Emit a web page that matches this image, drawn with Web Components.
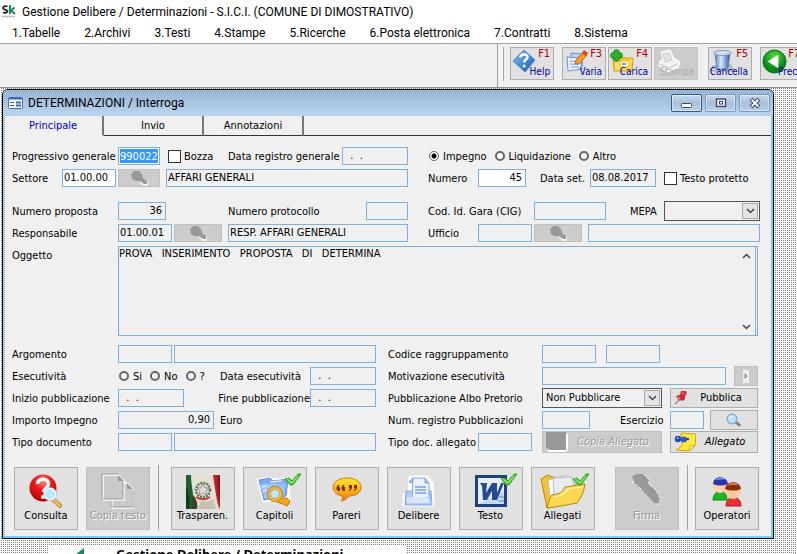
<!DOCTYPE html>
<html lang="it">
<head>
<meta charset="utf-8">
<title>Gestione Delibere / Determinazioni</title>
<style>
  html, body { height: 100%; }
  body {
    margin: 0;
    display: flex;
    flex-direction: column;
    overflow: hidden;
    background: #fff;
    color: #000;
    font: 11px/14px "DejaVu Sans Condensed", "Noto Sans", sans-serif;
  }

  /* label widths */
  .lead { --label: 106px; }
  .lead-wide { --label: 154px; }
  .lead-mid { --label: 90px; }
  .lead-short { --label: 50px; }
  .lead-date { --label: 114px; }
  .lead-prot { --label: 138px; }
  .lead-mepa { --label: 34px; }

  /* box widths */
  .xs { --box: 34px; }
  .s { --box: 42px; }
  .m { --box: 48px; }
  .l { --box: 54px; }
  .date { --box: 66px; }
  .cig { --box: 72px; }
  .sum { --box: 96px; }
  .list { --box: 120px; }
  .fill { flex: 1; --box: 100%; }

  /* distances inside a row */
  .near { margin-left: 4px; }
  .apart { margin-left: 6px; }
  .group { margin-left: 8px; }
  .far { margin-left: 12px; }
  .end { margin-left: auto; }
  .unit { padding-top: 2px; }
</style>
</head>
<body>
  <sk-titlebar>Gestione Delibere / Determinazioni - S.I.C.I. (COMUNE DI DIMOSTRATIVO)</sk-titlebar>
  <sk-menubar>
    <a href="#tabelle">1.Tabelle</a>
    <a href="#archivi">2.Archivi</a>
    <a href="#testi">3.Testi</a>
    <a href="#stampe">4.Stampe</a>
    <a href="#ricerche">5.Ricerche</a>
    <a href="#posta">6.Posta elettronica</a>
    <a href="#contratti">7.Contratti</a>
    <a href="#sistema">8.Sistema</a>
  </sk-menubar>
  <sk-toolbar>
    <sk-tool icon="help" key="F1">Help</sk-tool>
    <sk-tool icon="edit" key="F3" class="apart">Varia</sk-tool>
    <sk-tool icon="load" key="F4">Carica</sk-tool>
    <sk-tool icon="print" disabled>Stampa</sk-tool>
    <sk-tool icon="trash" key="F5" class="group">Cancella</sk-tool>
    <sk-tool icon="back" key="F7" class="apart">Prec.</sk-tool>
  </sk-toolbar>

  <sk-desktop>
    <sk-window caption="DETERMINAZIONI / Interroga">
      <sk-tabs slot="tabs">
        <button aria-current="page">Principale</button>
        <button>Invio</button>
        <button>Annotazioni</button>
      </sk-tabs>

      <sk-columns>
        <sk-row>
          <sk-field class="lead s" label="Progressivo generale" value="990022" selected></sk-field>
          <sk-check class="apart" label="Bozza"></sk-check>
          <sk-field class="lead-date date end" label="Data registro generale" value="  .  ."></sk-field>
        </sk-row>
        <sk-row slot="right">
          <sk-radios name="Tipo" options="Impegno|Liquidazione|Altro" checked="Impegno"></sk-radios>
        </sk-row>
        <sk-row>
          <sk-field class="lead-short l" label="Settore" value="01.00.00" editable></sk-field>
          <sk-button class="s" icon="lookup" name="Cerca settore" disabled></sk-button>
          <sk-field class="fill near" name="Descrizione settore" value="AFFARI GENERALI"></sk-field>
        </sk-row>
        <sk-row slot="right">
          <sk-field class="lead-short m" label="Numero" value="45" editable numeric></sk-field>
          <sk-field class="lead-short date far" label="Data set." value="08.08.2017"></sk-field>
          <sk-check class="apart" label="Testo protetto"></sk-check>
        </sk-row>
      </sk-columns>

      <sk-columns class="spaced">
        <sk-row>
          <sk-field class="lead m" label="Numero proposta" value="36" numeric></sk-field>
          <sk-field class="lead-prot s end" label="Numero protocollo"></sk-field>
        </sk-row>
        <sk-row slot="right">
          <sk-field class="lead cig" label="Cod. Id. Gara (CIG)"></sk-field>
          <sk-select class="lead-mepa sum end" label="MEPA" value=""></sk-select>
        </sk-row>
        <sk-row>
          <sk-field class="lead l" label="Responsabile" value="01.00.01"></sk-field>
          <sk-button class="m" icon="lookup" name="Cerca responsabile" disabled></sk-button>
          <sk-field class="fill near" name="Nome responsabile" value="RESP. AFFARI GENERALI"></sk-field>
        </sk-row>
        <sk-row slot="right">
          <sk-field class="lead-short l" label="Ufficio"></sk-field>
          <sk-button class="m" icon="lookup" name="Cerca ufficio" disabled></sk-button>
          <sk-field class="fill near" name="Descrizione ufficio"></sk-field>
        </sk-row>
      </sk-columns>

      <sk-memo class="lead" label="Oggetto">PROVA   INSERIMENTO   PROPOSTA   DI   DETERMINA</sk-memo>

      <sk-columns class="lower">
        <sk-row>
          <sk-field class="lead l" label="Argomento"></sk-field>
          <sk-field class="fill" name="Descrizione argomento"></sk-field>
        </sk-row>
        <sk-row slot="right">
          <sk-field class="lead-wide l" label="Codice raggruppamento"></sk-field>
          <sk-field class="l group" name="Sottocodice"></sk-field>
        </sk-row>
        <sk-row>
          <sk-radios class="lead" label="Esecutività" name="Esecutività" options="Si|No|?"></sk-radios>
          <sk-field class="lead-mid date end" label="Data esecutività" value="  .  ."></sk-field>
        </sk-row>
        <sk-row slot="right">
          <sk-field class="lead-wide fill" label="Motivazione esecutività"></sk-field>
          <sk-button class="apart" icon="more" name="Altre motivazioni" disabled style="--box: 24px; --height: 20px"></sk-button>
        </sk-row>
        <sk-row>
          <sk-field class="lead date" label="Inizio pubblicazione" value="  .  ."></sk-field>
          <sk-field class="lead-mid date end" label="Fine pubblicazione" value="  .  ."></sk-field>
        </sk-row>
        <sk-row slot="right">
          <sk-select class="lead-wide list" label="Pubblicazione Albo Pretorio" value="Non Pubblicare"></sk-select>
          <sk-button class="end" icon="pin" style="--box: 88px; --height: 20px">Pubblica</sk-button>
        </sk-row>
        <sk-row>
          <sk-field class="lead sum" label="Importo Impegno" value="0,90" numeric></sk-field>
          <span class="near unit">Euro</span>
        </sk-row>
        <sk-row slot="right">
          <sk-field class="lead-wide m" label="Num. registro Pubblicazioni"></sk-field>
          <sk-field class="lead-short xs end" label="Esercizio"></sk-field>
          <sk-button class="m near" icon="zoom" name="Cerca registro" style="--height: 20px"></sk-button>
        </sk-row>
        <sk-row>
          <sk-field class="lead l" label="Tipo documento"></sk-field>
          <sk-field class="fill" name="Descrizione tipo documento"></sk-field>
        </sk-row>
        <sk-row slot="right">
          <sk-field class="lead-mid l" label="Tipo doc. allegato"></sk-field>
          <sk-button class="list end" icon="sheet" disabled slanted style="--height: 22px">Copia Allegato</sk-button>
          <sk-button class="apart" icon="attach" slanted style="--box: 88px; --height: 22px">Allegato</sk-button>
        </sk-row>
      </sk-columns>

      <sk-actions slot="actions">
        <sk-action icon="consulta">Consulta</sk-action>
        <sk-action icon="copia" disabled>Copia testo</sk-action>
        <hr>
        <sk-action class="near" icon="trasparenza">Trasparen.</sk-action>
        <sk-action icon="capitoli">Capitoli</sk-action>
        <sk-action icon="pareri">Pareri</sk-action>
        <sk-action icon="delibere">Delibere</sk-action>
        <sk-action icon="testo">Testo</sk-action>
        <sk-action icon="allegati">Allegati</sk-action>
        <sk-action class="far" icon="firma" disabled>Firma</sk-action>
        <hr>
        <sk-action icon="operatori">Operatori</sk-action>
      </sk-actions>
    </sk-window>
    <sk-banner>Gestione Delibere / Determinazioni</sk-banner>
  </sk-desktop>

<script>
const TICK = `<path d="M28 6l4-1 3 3 6-7h3l-8 11h-3z" fill="#4fc832" stroke="#2a9a1c" stroke-width=".8"/><path d="M30 6l5 4 6-7" fill="none" stroke="#b4f09a"/>`;

const ICONS = {
  logo: `<svg viewBox="0 0 14 14" width="14" height="14"><path d="M5.500 1.500C3 .5 1 1.500 1 3s1.500 1.500 3 2 2 1 1 2-2.500 1-4 .3" fill="none" stroke="#222" stroke-width="1.800"/><path d="M8 0v9M12.500 2.500L9 5.500l4 3.500" fill="none" stroke="#1c8a5a" stroke-width="2"/><path d="M0 11.500h13" stroke="#999" stroke-dasharray="1 .6" stroke-width="1.500"/></svg>`,
  form: `<svg viewBox="0 0 15 12" width="15" height="12"><rect x=".5" y=".5" width="14" height="11" rx="1" fill="#f4f8ff" stroke="#4a70b8"/><path d="M1 1.500h13" stroke="#3c68b8" stroke-width="2"/><path d="M2 5.500h4M2 8.500h4" stroke="#555"/><rect x="8" y="4.500" width="5" height="2" fill="#3c68b8"/><rect x="8" y="7.500" width="5" height="2" fill="#3c68b8"/></svg>`,
  help: `<svg viewBox="0 0 24 24" width="24" height="24"><defs><linearGradient id="g" x1="0" y1="0" x2="1" y2="1"><stop offset="0" stop-color="#8cc4f4"/><stop offset="1" stop-color="#0c54b4"/></linearGradient></defs><path d="M12 1l11 10-10 12L1 12z" fill="url(#g)" stroke="#4888d0"/><path d="M8.500 8.500c0-4 7-4 7-.5 0 2.500-3.300 2.500-3.300 5.500" fill="none" stroke="#fff" stroke-width="2.500"/><circle cx="12.200" cy="17" r="1.500" fill="#fff"/></svg>`,
  edit: `<svg viewBox="0 0 24 24" width="24" height="24"><path d="M7 4l12 1-1 13-12-1z" fill="#b8d0fa" stroke="#6890e0"/><path d="M3 8l13 1 2 11-14 2z" fill="#e8f0ff" stroke="#6890e0"/><path d="M6 12l8 .5M6 15l9 .5M7 18h8" stroke="#7ca0e8"/><path d="M12 11l7-8 4 3-7 8-5 1z" fill="#f8a020" stroke="#c86810"/><path d="M18 4l2-3 4 3-2 3z" fill="#e04030"/></svg>`,
  load: `<svg viewBox="0 0 24 24" width="24" height="24"><path d="M3 8l8-1 2 2h10l-1 13H4z" fill="#f8c828" stroke="#d89c10"/><path d="M5 11h17l-1 10H5z" fill="#fce060"/><path d="M10 12h9v6h-9z" fill="#fff4b8" stroke="#e0b030"/><path d="M12 14h4v2h-4z" fill="#70a0e0"/><g fill="#30b028" stroke="#188018" stroke-width=".7"><circle cx="6.500" cy="3.500" r="3"/><circle cx="3.500" cy="6.500" r="3"/><circle cx="9.500" cy="6.500" r="3"/><circle cx="6.500" cy="9.500" r="3"/></g><circle cx="6.500" cy="6.500" r="3" fill="#30b028"/></svg>`,
  print: `<svg viewBox="0 0 24 24" width="24" height="24"><path d="M5 3l9-2 4 8 6 4-2 6-10 4-9-6 1-5 3-2z" fill="#f2f2f2" stroke="#fff"/><path d="M7 5l6-1 3 7-7 2z" fill="#e4e4e4" stroke="#ccc"/><path d="M4 15l9 4 8-4" fill="none" stroke="#bbb"/></svg>`,
  trash: `<svg viewBox="0 0 24 24" width="24" height="24"><defs><linearGradient id="g"><stop offset="0" stop-color="#5880c0"/><stop offset=".4" stop-color="#d8e8ff"/><stop offset="1" stop-color="#2858a8"/></linearGradient></defs><path d="M3 17l18-1 2 6H1z" fill="#c8ccd2" stroke="#999"/><path d="M5 4h15l-2 16H7z" fill="url(#g)" stroke="#6080b0"/><ellipse cx="12.500" cy="4" rx="8.500" ry="2.500" fill="#d4dce8" stroke="#8090a8"/></svg>`,
  back: `<svg viewBox="0 0 26 26" width="25" height="25"><defs><radialGradient id="g" cy=".3"><stop offset="0" stop-color="#60e040"/><stop offset="1" stop-color="#088818"/></radialGradient></defs><circle cx="13" cy="13" r="12" fill="url(#g)" stroke="#107018"/><path d="M17 6v14L6 13z" fill="#fff"/></svg>`,
  lookup: `<svg viewBox="0 0 18 16" width="18" height="16"><path d="M17 11v4h-3l-4-3" fill="none" stroke="#fff" stroke-width="1.500"/><path d="M1 4l3-3h5l3 3 1 4 4 3v3h-3l-4-3-5 0-3-2z" fill="#999"/></svg>`,
  more: `<svg viewBox="0 0 6 13" width="6" height="13"><path d="M0 0h6v13H0z" fill="#eee"/><path d="M1.500 4l2 2-2 2" fill="none" stroke="#222"/></svg>`,
  pin: `<svg viewBox="0 0 14 14" width="14" height="14"><path d="M5 9l-4 4" stroke="#888" stroke-width="1.200"/><path d="M7 0h5l1 2-2 3 0 3-2 2-2-1-1 1-4-4 2-2 2 0z" fill="#d02838"/><path d="M8 2l2 1M4 6l2 2" stroke="#ff8890" stroke-width="1.200"/></svg>`,
  zoom: `<svg viewBox="0 0 16 14" width="16" height="14"><path d="M10 8l5 4-2 1-4-3z" fill="#a87850" stroke="#886"/><circle cx="6" cy="6" r="4.800" fill="#b8e0fc" stroke="#8cacd0" stroke-width="1.500"/><path d="M3.500 6a3 3 0 0 1 3-3" stroke="#fff" fill="none"/></svg>`,
  sheet: `<svg viewBox="0 0 22 20" width="22" height="20"><path d="M2 2h20v16l-3 2H2z" fill="#fff"/><path d="M0 0h20v18H4l-4-2z" fill="#999"/></svg>`,
  attach: `<svg viewBox="0 0 22 20" width="22" height="20"><path d="M7 1l15 1-1 12-6 5-13-1 6-4z" fill="#fce840" stroke="#c8a818"/><path d="M15 19l1-5h5z" fill="#fff8b0" stroke="#c8a818"/><circle cx="4" cy="7" r="3.300" fill="#2848b0"/><circle cx="10" cy="7.500" r="3" fill="#3858c8"/><circle cx="3.500" cy="6" r="1" fill="#a8c0ff"/><path d="M12 7h3" stroke="#2848b0" stroke-width="2"/></svg>`,
  consulta: `<svg viewBox="0 0 36 36" width="36" height="36"><defs><radialGradient id="g" cx=".5" cy=".25" r=".8"><stop offset="0" stop-color="#ff9080"/><stop offset=".4" stop-color="#f01818"/><stop offset="1" stop-color="#a80000"/></radialGradient></defs><circle cx="15" cy="15" r="13.500" fill="url(#g)"/><path d="M9.500 11c0-6.500 11-6.500 11 0 0 4-5 4-5 8" fill="none" stroke="#fff" stroke-width="3.500"/><circle cx="15" cy="24" r="2" fill="#fff"/><path d="M26 25l8 7-2 3-8-7z" fill="#f0c050" stroke="#b88030"/><circle cx="22" cy="21" r="5.800" fill="#b8eafc" stroke="#fff" stroke-width="1.500"/><circle cx="22" cy="21" r="6.500" fill="none" stroke="#a8b4c0" stroke-width=".6"/></svg>`,
  copia: `<svg viewBox="0 0 36 36" width="36" height="36"><g fill="#cacaca" stroke="#fff" stroke-width="1.500"><path d="M12 10h15l6 6v19H12z"/><path d="M3 2h15l6 6v19H3z"/></g><path d="M18 2v6h6zM27 10v6h6z" fill="#999"/><path d="M2 27V1h16M11 28v6h22V17M3 26h20V9" fill="none" stroke="#999"/></svg>`,
  trasparenza: `<svg viewBox="0 0 36 36" width="36" height="36"><path d="M1 2h34v34H1z" fill="#e4dfd2"/><path d="M1 2h5c0 12 4 22 2 34H1z" fill="#1c6030"/><path d="M1 14c3 5 4 14 3 22H1z" fill="#0c3c1c"/><path d="M8 22c4 5 5 10 4 14H7z" fill="#443c28"/><path d="M28 2h7v34c-2-3-3-8-4-14z" fill="#c02028"/><path d="M33 2c-2 10 0 20 2 28V2z" fill="#8c1820"/><path d="M16 28c5 1 9 0 12-2l3 10H13z" fill="#c8c0b0"/><circle cx="18" cy="17" r="7" fill="none" stroke="#5c7858" stroke-width="2.500" stroke-dasharray="2 1"/><path d="M18 11l2 4h4l-3 3 1 4-4-2-4 2 1-4-3-3h4z" fill="#ddd" stroke="#777" stroke-width=".7"/><path d="M11 24c4 3 10 3 14 0" stroke="#c83838" stroke-width="2" fill="none"/></svg>`,
  capitoli: `<svg viewBox="0 0 36 36" width="36" height="36" overflow="visible"><path d="M1 7l12-2 3 2 14-1 2 18-25 4z" fill="#fff" stroke="#fff" stroke-width="3"/><path d="M2 7l11-2 3 3 15-2-2 17-22 4z" fill="#7ca8f0" stroke="#6890dc"/><path d="M2 11l27-1-2 13-19 3z" fill="#9cc0fa"/><path d="M5 14l5-1M6 18l4-1M13 9l12-1" stroke="#d8e8ff" stroke-width="1.500"/><path d="M22 25l8 0 3 4-3 4-4-2-6-2z" fill="#f0a818" stroke="#c07808"/><circle cx="18" cy="21" r="7.500" fill="#f8b820" stroke="#c88010"/><circle cx="18" cy="21" r="4.500" fill="#c0e8fc" stroke="#88b0d0"/>${TICK}</svg>`,
  pareri: `<svg viewBox="0 0 36 36" width="36" height="36"><defs><linearGradient id="g" x2="0" y2="1"><stop offset="0" stop-color="#ffec30"/><stop offset="1" stop-color="#f07808"/></linearGradient></defs><path d="M18 5c19 0 18 18 2 18-2 3-5 5-8 5 2-2 2-4 1-5C-1 20 2 5 18 5z" fill="url(#g)" stroke="#d87808"/><path d="M9 12c-2 2-2 5 0 6h2v-4H9.500l1-2zM14 12c-2 2-2 5 0 6h2v-4h-1.500l1-2zM20 12h3v3l-2 3h-1l1-3h-1zM25 12h3v3l-2 3h-1l1-3h-1z" fill="#80300c"/></svg>`,
  delibere: `<svg viewBox="0 0 36 36" width="36" height="36"><path d="M9 4h17l5 6 1 22H3V22l5-2z" fill="#fff" stroke="#fff" stroke-width="3"/><path d="M5 18h25l1 14H4z" fill="#b4caf8" stroke="#84a4e4"/><path d="M12 5h12l4 5v15l-17 1z" fill="#eaf2ff" stroke="#84a4e4"/><path d="M24 5v5h4M12 5L8 9l3 1z" fill="#9cb8f4" stroke="#84a4e4"/><path d="M14 14h11M14 17h11M14 20h11" stroke="#7c9ce4" stroke-width="1.500"/><path d="M6 24l22 1v5H6z" fill="#d8e6ff"/></svg>`,
  testo: `<svg viewBox="0 0 36 36" width="36" height="36" overflow="visible"><path d="M2 2h32v32H2z" fill="#1c4080"/><path d="M5 5h26v26H5z" fill="#c8d8f0"/><path d="M5 5h26v13L5 31z" fill="#e8f0fc"/><path d="M7 10h7l-1 10 6-10h5l0 10 4-10h3l-7 17h-5l0-9-5 9h-4L9 13z" fill="#244c94"/><path d="M26 24h5M25 28h6" stroke="#6888c0"/>${TICK}</svg>`,
  allegati: `<svg viewBox="0 0 36 36" width="36" height="36" overflow="visible"><path d="M-4 6l7-4 4 2 20 4 4 5-5 16-24 6z" fill="#f4c430" stroke="#b88410"/><path d="M3 7l19-5 7 12-24 9z" fill="#fff" stroke="#bbb"/><path d="M8 5l18-1 5 12-22 6z" fill="#e8ecf4" stroke="#bbb"/><path d="M2 35c2-8 3-11 5-13 8-1 10-3 13-8l20-3c-1 8-4 14-8 19C22 32 12 34 2 35z" fill="#fcd850" stroke="#b88410"/><path d="M9 24c8-1 11-4 14-8l14-2" fill="none" stroke="#fff4a8" stroke-width="1.500"/>${TICK}</svg>`,
  firma: `<svg viewBox="0 0 36 36" width="36" height="36"><path d="M3 3l5-2h7l5 6 0 5 7 5 4 7 0 7-6-1-8-9-6-6-5-3z" fill="#999"/><path d="M15 1l5 6v4l7 6 4 8v6h-5M3 8l9 8" fill="none" stroke="#fff" stroke-dasharray="3 1.500"/></svg>`,
  operatori: `<svg viewBox="0 0 36 36" width="36" height="36"><path d="M4 27c0-11 14-12 14 0z" fill="#18b828" stroke="#0c8818"/><circle cx="11" cy="13" r="7" fill="#fcd0a8"/><path d="M4 11c0-9 14-9 15 0-5 2-10 2-15 0z" fill="#2838a8"/><path d="M7 7c3-2 5-2 8-1" stroke="#90a0f0" fill="none" stroke-width="1.500"/><path d="M17 33c0-12 15-12 15 0z" fill="#e83030" stroke="#b81818"/><circle cx="24" cy="18.500" r="7.500" fill="#fcc8a0"/><path d="M16 16c1-9 15-9 16 0-5 2-11 2-16 0z" fill="#8c3010"/><path d="M20 12c3-2 5-2 8 0" stroke="#e89060" fill="none" stroke-width="1.500"/></svg>`,
  up: `<svg viewBox="0 0 9 6" width="9" height="6"><path d="M1 5l3.500-3.500L8 5" fill="none" stroke="#444" stroke-width="1.500"/></svg>`,
  down: `<svg viewBox="0 0 9 6" width="9" height="6"><path d="M1 1l3.500 3.500L8 1" fill="none" stroke="#444" stroke-width="1.500"/></svg>`,
};

const BASE = `
  :host, * { box-sizing: border-box; }
  button, input, select, textarea { margin: 0; padding: 0; border-radius: 0; font: inherit; color: inherit; }
  svg { display: block; flex: none; }
`;

class SkElement extends HTMLElement {
  constructor() {
    super();
    this.attachShadow({ mode: "open" });
  }

  /** @param {string} name */
  text(name) {
    return this.getAttribute(name) ?? "";
  }

  /**
   * @param {string} css
   * @param {string} html
   */
  render(css, html) {
    this.shadowRoot.innerHTML = `<style>${BASE}${css}</style>${html}`;
  }
}

class TitleBar extends SkElement {
  connectedCallback() {
    this.render(`
      :host {
        display: flex;
        align-items: center;
        gap: 6px;
        flex: none;
        height: 24px;
        padding: 0 2px;
        font: 12px/16px Roboto, "Noto Sans", sans-serif;
        white-space: nowrap;
      }
    `, `${ICONS.logo}<slot></slot>`);
  }
}

class MenuBar extends SkElement {
  connectedCallback() {
    this.render(`
      :host {
        display: flex;
        align-items: center;
        gap: 24px;
        flex: none;
        height: 20px;
        padding: 0 12px 1px;
        border-bottom: 1px solid #a0a0a0;
        font: 12px/16px Roboto, "Noto Sans", sans-serif;
        white-space: nowrap;
      }
      ::slotted(a) { color: #000; text-decoration: none; }
    `, `<slot></slot>`);
  }
}

class ToolBar extends SkElement {
  connectedCallback() {
    this.render(`
      :host {
        display: flex;
        flex: none;
        gap: 4px;
        height: 44px;
        background: #f0f0f0;
        border-bottom: 1px solid #909090;
        overflow: hidden;
      }
      .blank { flex: 0 0 62.5%; border-right: 1px solid #a0a0a0; }
      .tools { display: flex; gap: 2px; padding: 3px 0 6px; }
      .grip { width: 2px; margin-right: 4px; border-right: 1px solid #a0a0a0; background: #fff; }
    `, `<div class="blank"></div><div class="tools"><div class="grip"></div><slot></slot></div>`);
  }
}

class Tool extends SkElement {
  connectedCallback() {
    const off = this.hasAttribute("disabled");
    this.render(`
      :host { display: block; flex: none; font: 10px/12px "DejaVu Sans Condensed", sans-serif; }
      button {
        display: grid;
        grid-template: 20px 12px / 24px 18px;
        width: 44px;
        height: 33px;
        border: 1px solid #adadad;
        background: #e1e1e1;
        color: #0000a0;
      }
      button:disabled { background: #ccc; border-color: #c4c4c4; color: #aaa; }
      svg { grid-area: 1 / 1 / 3 / 2; margin: 1px; }
      b { grid-area: 1 / 2; font-weight: normal; color: #b00000; font-size: 11px; }
      span { grid-area: 2 / 1 / 3 / 3; justify-self: end; white-space: nowrap; padding-right: 3px; margin-top: -2px; }
    `, `<button ${off ? "disabled" : ""}>${ICONS[this.text("icon")]}<b>${this.text("key")}</b><span><slot></slot></span></button>`);
  }
}

class Desktop extends SkElement {
  connectedCallback() {
    this.render(`
      :host {
        display: block;
        flex: 1;
        min-height: 0;
        overflow: hidden;
        padding: 1px 23px 0 2px;
        background: conic-gradient(#808080 25%, #fff 0) 0 0 / 2px 2px;
      }
    `, `<slot></slot>`);
  }
}

class ChildWindow extends SkElement {
  connectedCallback() {
    this.render(`
      :host {
        display: block;
        border: 1px solid #000;
        border-radius: 6px 6px 0 0;
        background: #f0f0f0;
        overflow: hidden;
        box-shadow: inset -2px -2px #6cd0f0, inset 2px 0 #b4cce4;
      }
      header {
        display: flex;
        align-items: center;
        gap: 5px;
        height: 26px;
        padding: 0 3px 0 5px;
        background: linear-gradient(#98b4d4, #b4cfea 80%, #bcd4ec);
        font: 12px/16px Roboto, "Noto Sans", sans-serif;
      }
      h1 { flex: 1; margin: 0; font: inherit; }
      .controls { display: flex; gap: 3px; }
      .controls button {
        display: grid;
        place-items: center;
        width: 31px;
        height: 18px;
        border: 1px solid #8098b8;
        border-radius: 2px;
        background: linear-gradient(#c8d9ec, #a8c0dc 50%, #b8d0ea);
        box-shadow: inset 0 0 0 1px #ffffff70;
      }
      .controls button:first-child { border-color: #405878; }
      main { padding: 9px 13px 0 9px; }
      footer { padding: 14px 14px 8px 11px; }
      ::slotted(.spaced) { margin-top: 11px; }
      ::slotted(.lower) { --columns: 364fr 370fr; --gap: 12px; margin: 7px 2px 0 0; }
    `, `
      <header>
        ${ICONS.form}
        <h1>${this.text("caption")}</h1>
        <div class="controls">
          <button aria-label="Riduci"><svg viewBox="0 0 12 12" width="12" height="12"><rect x=".5" y="6.500" width="10" height="4" rx="1" fill="#fff" stroke="#445"/></svg></button>
          <button aria-label="Ingrandisci"><svg viewBox="0 0 12 12" width="12" height="12"><rect x="1.500" y="2" width="9" height="7.500" fill="#e8eef6" stroke="#445" stroke-width="1.300"/><rect x="4.500" y="4.500" width="3" height="2.500" fill="#fff" stroke="#445"/></svg></button>
          <button aria-label="Chiudi"><svg viewBox="0 0 12 12" width="12" height="12"><path d="M2 2l8 8M10 2l-8 8" stroke="#445" stroke-width="4"/><path d="M2.500 2.500l7 7M9.500 2.500l-7 7" stroke="#f4f6fa" stroke-width="2"/></svg></button>
        </div>
      </header>
      <slot name="tabs"></slot>
      <main><slot></slot></main>
      <footer><slot name="actions"></slot></footer>
    `);
  }
}

class Tabs extends SkElement {
  connectedCallback() {
    this.render(`
      :host { display: flex; height: 20px; margin: 0 2px 0 1px; }
      ::slotted(button) {
        flex: 0 0 100px;
        padding: 0;
        border: 0;
        border-right: 2px solid #777;
        border-bottom: 1px solid #333;
        background: none;
        font: inherit;
        color: #000;
      }
      ::slotted([aria-current]) { border-bottom-color: transparent; color: #0000c0; }
      i { flex: 1; border-bottom: 1px solid #333; }
    `, `<slot></slot><i></i>`);
  }
}

/* Two stacks of rows, side by side */
class Columns extends SkElement {
  connectedCallback() {
    this.render(`
      :host {
        display: grid;
        grid-template-columns: var(--columns, 396fr 332fr);
        gap: var(--gap, 20px);
      }
      div { min-width: 0; }
    `, `<div><slot></slot></div><div><slot name="right"></slot></div>`);
  }
}

class Row extends SkElement {
  connectedCallback() {
    this.render(`
      :host { display: flex; align-items: center; gap: 2px; height: 22px; white-space: nowrap; }
    `, `<slot></slot>`);
  }
}

class Field extends SkElement {
  connectedCallback() {
    const label = this.text("label");
    this.render(`
      :host { display: flex; align-items: center; min-width: 0; }
      label { flex: 0 0 var(--label); padding-top: 2px; }
      input {
        width: var(--box);
        min-width: 0;
        height: 18px;
        padding: 0 1px 1px;
        border: 1px solid #7eb0de;
        background: transparent;
        outline: 0;
        white-space: pre;
      }
      :host([editable]) input { background: #fff; }
      :host([numeric]) input { text-align: right; padding-right: 3px; }
      :host([selected]) input { padding: 1px; background: #3399ff content-box; color: #fff; box-shadow: inset 0 0 0 1px #fff; }
    `, `
      ${label ? `<label for="box">${label}</label>` : ""}
      <input id="box" value="${this.text("value")}" ${label ? "" : `aria-label="${this.text("name")}"`}>
    `);
  }
}

class Check extends SkElement {
  connectedCallback() {
    this.render(`
      :host { display: flex; align-items: center; gap: 3px; }
      input { appearance: none; width: 13px; height: 13px; border: 1px solid #333; background: #fff; }
      label { padding-top: 2px; }
    `, `<input type="checkbox" id="box"><label for="box">${this.text("label")}</label>`);
  }
}

class Radios extends SkElement {
  connectedCallback() {
    const label = this.text("label");
    const items = this.text("options").split("|").map((option, i) => `
      <input type="radio" name="choice" id="r${i}" ${option === this.text("checked") ? "checked" : ""}>
      <label for="r${i}">${option}</label>
    `).join("");
    this.render(`
      :host { display: flex; }
      div { display: flex; align-items: center; }
      .caption { flex: 0 0 var(--label); padding-top: 2px; }
      input {
        appearance: none;
        width: 10px;
        height: 10px;
        margin-left: 1px;
        border: 2px solid #666;
        border-radius: 50%;
        background: #fff;
      }
      input:checked { border-width: 1px; background: radial-gradient(#000 2px, #fff 3px); }
      label { padding: 1px 7px 0 4px; }
    `, `
      <div role="radiogroup" aria-label="${this.text("name")}">
        ${label ? `<span class="caption">${label}</span>` : ""}${items}
      </div>
    `);
  }
}

class Select extends SkElement {
  connectedCallback() {
    this.render(`
      :host { display: flex; align-items: center; }
      label { flex: 0 0 var(--label); padding-top: 2px; }
      .box { display: grid; grid-template-columns: 1fr 18px; width: var(--box); height: 20px; border: 1px solid #555; }
      select { grid-area: 1 / 1 / 2 / 3; appearance: none; border: 0; padding: 0 20px 0 3px; background: none; outline: 0; }
      i {
        grid-area: 1 / 2;
        display: grid;
        place-items: center;
        margin: 1px;
        border: 1px solid #aaa;
        background: #e4e4e4;
        pointer-events: none;
      }
    `, `
      <label for="list">${this.text("label")}</label>
      <div class="box"><select id="list"><option>${this.text("value")}</option></select><i>${ICONS.down}</i></div>
    `);
  }
}

class Memo extends SkElement {
  connectedCallback() {
    this.render(`
      :host { display: flex; margin: 2px 2px 0 0; }
      label { flex: 0 0 var(--label); padding-top: 3px; }
      .box { flex: 1; display: flex; height: 90px; border: 1px solid #7eb0de; padding-right: 1px; }
      textarea { flex: 1; border: 0; outline: 0; resize: none; overflow: hidden; background: none; white-space: pre-wrap; }
      .bar { display: flex; flex-direction: column; justify-content: space-between; border-right: 1px solid #7eb0de; }
      .bar button { display: grid; place-items: center; width: 18px; height: 17px; border: 0; background: none; }
    `, `
      <label for="memo">${this.text("label")}</label>
      <div class="box">
        <textarea id="memo">${this.textContent}</textarea>
        <div class="bar">
          <button aria-label="Su">${ICONS.up}</button>
          <button aria-label="Giù">${ICONS.down}</button>
        </div>
      </div>
    `);
  }
}

class Button extends SkElement {
  connectedCallback() {
    const name = this.text("name");
    this.render(`
      :host { display: block; flex: none; width: var(--box); }
      button {
        display: flex;
        align-items: center;
        justify-content: center;
        width: 100%;
        height: var(--height, 18px);
        padding: 0 3px;
        border: 1px solid #adadad;
        background: #e1e1e1;
        overflow: hidden;
      }
      span { flex: 1; text-align: center; white-space: nowrap; }
      :host([slanted]) span { font-style: italic; }
      button:disabled { background: #ccc; border-color: #c0c0c0; color: #999; text-shadow: 1px 1px #fff; }
    `, `
      <button ${this.hasAttribute("disabled") ? "disabled" : ""} ${name ? `aria-label="${name}"` : ""}>
        ${ICONS[this.text("icon")]}${name ? "" : "<span><slot></slot></span>"}
      </button>
    `);
  }
}

class Actions extends SkElement {
  connectedCallback() {
    this.render(`
      :host { display: flex; gap: 8px; }
      ::slotted(hr) { width: 1px; height: 65px; margin: -2px 0 0; border: 0; background: #a0a0a0; }
    `, `<slot></slot>`);
  }
}

class Action extends SkElement {
  connectedCallback() {
    this.render(`
      :host { display: block; flex: none; }
      button {
        display: flex;
        flex-direction: column;
        align-items: center;
        width: 64px;
        height: 63px;
        padding-top: 5px;
        border: 1px solid #adadad;
        background: #e1e1e1;
        white-space: nowrap;
      }
      button:disabled { background: #ccc; border-color: #c0c0c0; color: #999; text-shadow: 1px 1px #fff; }
    `, `<button ${this.hasAttribute("disabled") ? "disabled" : ""}>${ICONS[this.text("icon")]}<span><slot></slot></span></button>`);
  }
}

class Banner extends SkElement {
  connectedCallback() {
    this.render(`
      :host {
        display: flex;
        gap: 32px;
        width: 358px;
        margin: 6px 0 0 46px;
        padding: 0 0 8px 24px;
        background: #fff;
        font: bold 13px/18px "Noto Sans", sans-serif;
        white-space: nowrap;
      }
    `, `<svg viewBox="0 0 12 18" width="12" height="18"><path d="M12 3v12L0 12z" fill="#1c8a5a"/></svg><slot></slot>`);
  }
}

customElements.define("sk-titlebar", TitleBar);
customElements.define("sk-menubar", MenuBar);
customElements.define("sk-toolbar", ToolBar);
customElements.define("sk-tool", Tool);
customElements.define("sk-desktop", Desktop);
customElements.define("sk-window", ChildWindow);
customElements.define("sk-tabs", Tabs);
customElements.define("sk-columns", Columns);
customElements.define("sk-row", Row);
customElements.define("sk-field", Field);
customElements.define("sk-check", Check);
customElements.define("sk-radios", Radios);
customElements.define("sk-select", Select);
customElements.define("sk-memo", Memo);
customElements.define("sk-button", Button);
customElements.define("sk-actions", Actions);
customElements.define("sk-action", Action);
customElements.define("sk-banner", Banner);
</script>
</body>
</html>
